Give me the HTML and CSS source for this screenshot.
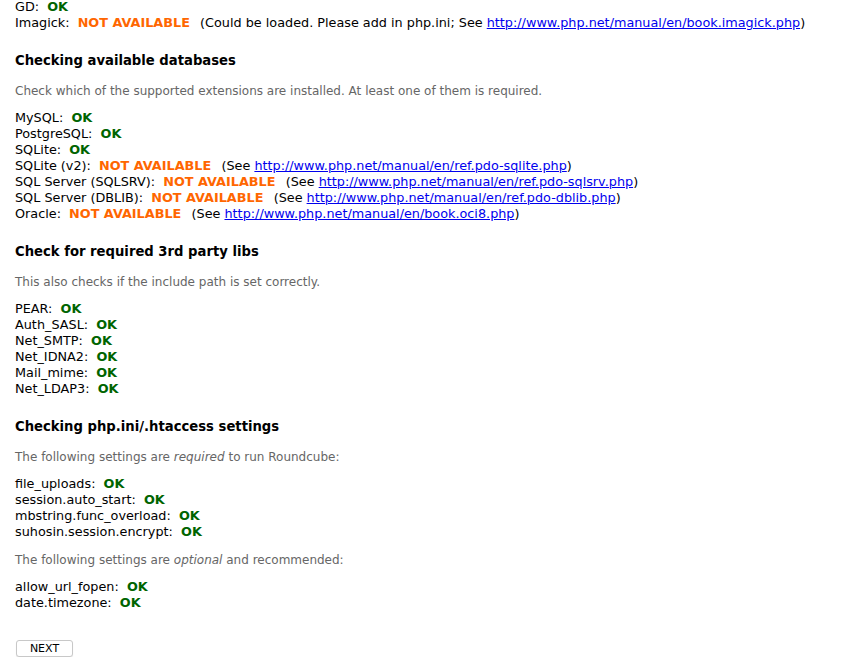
FILE: index.html
```html
<!DOCTYPE html>
<html>
<head>
<meta charset="utf-8">
<title>Roundcube Webmail Installer</title>
<link rel="stylesheet" href="styles.css">
</head>
<body>
<div class="page">
  <div class="list first">
    GD:&nbsp; <span class="success">OK</span><br>
    Imagick:&nbsp; <span class="na">NOT AVAILABLE</span><span class="indent">(Could be loaded. Please add in php.ini; See <a href="#">http://www.php.net/manual/en/book.imagick.php</a>)</span>
  </div>

  <h3>Checking available databases</h3>
  <p class="hint">Check which of the supported extensions are installed. At least one of them is required.</p>
  <div class="list">
    MySQL:&nbsp; <span class="success">OK</span><br>
    PostgreSQL:&nbsp; <span class="success">OK</span><br>
    SQLite:&nbsp; <span class="success">OK</span><br>
    SQLite (v2):&nbsp; <span class="na">NOT AVAILABLE</span><span class="indent">(See <a href="#">http://www.php.net/manual/en/ref.pdo-sqlite.php</a>)</span><br>
    SQL Server (SQLSRV):&nbsp; <span class="na">NOT AVAILABLE</span><span class="indent">(See <a href="#">http://www.php.net/manual/en/ref.pdo-sqlsrv.php</a>)</span><br>
    SQL Server (DBLIB):&nbsp; <span class="na">NOT AVAILABLE</span><span class="indent">(See <a href="#">http://www.php.net/manual/en/ref.pdo-dblib.php</a>)</span><br>
    Oracle:&nbsp; <span class="na">NOT AVAILABLE</span><span class="indent">(See <a href="#">http://www.php.net/manual/en/book.oci8.php</a>)</span>
  </div>

  <h3>Check for required 3rd party libs</h3>
  <p class="hint">This also checks if the include path is set correctly.</p>
  <div class="list">
    PEAR:&nbsp; <span class="success">OK</span><br>
    Auth_SASL:&nbsp; <span class="success">OK</span><br>
    Net_SMTP:&nbsp; <span class="success">OK</span><br>
    Net_IDNA2:&nbsp; <span class="success">OK</span><br>
    Mail_mime:&nbsp; <span class="success">OK</span><br>
    Net_LDAP3:&nbsp; <span class="success">OK</span>
  </div>

  <h3>Checking php.ini/.htaccess settings</h3>
  <p class="hint">The following settings are <em>required</em> to run Roundcube:</p>
  <div class="list">
    file_uploads:&nbsp; <span class="success">OK</span><br>
    session.auto_start:&nbsp; <span class="success">OK</span><br>
    mbstring.func_overload:&nbsp; <span class="success">OK</span><br>
    suhosin.session.encrypt:&nbsp; <span class="success">OK</span>
  </div>
  <p class="hint">The following settings are <em>optional</em> and recommended:</p>
  <div class="list">
    allow_url_fopen:&nbsp; <span class="success">OK</span><br>
    date.timezone:&nbsp; <span class="success">OK</span>
  </div>

  <div class="actions"><button class="btn" type="button">NEXT</button></div>
</div>
</body>
</html>
```
FILE: styles.css
```css
html, body {
  margin: 0;
  padding: 0;
  background: #fff;
}
body {
  font-family: "DejaVu Sans", "Liberation Sans", sans-serif;
  font-size: 12.8px;
  line-height: 16px;
  color: #000;
}
.page {
  padding-left: 15px;
}
.list {
  margin: 11px 0 0 0;
}
.list.first {
  margin-top: -1px;
}
.success {
  color: #006400;
  font-weight: bold;
}
.na {
  color: #f60;
  font-weight: bold;
}
.indent {
  padding-left: 0.8em;
}
a {
  color: #0000ee;
  text-decoration: underline;
}
h3 {
  font-size: 13.2px;
  line-height: 18px;
  font-weight: bold;
  margin: 21px 0 0 0;
}
.hint {
  color: #666;
  font-size: 12px;
  margin: 13px 0 0 0;
}
.list + .hint {
  margin-top: 12px;
}
.hint em {
  font-style: italic;
}
.actions {
  margin-top: 29px;
  padding-left: 1px;
}
.btn {
  font-family: "DejaVu Sans", "Liberation Sans", sans-serif;
  font-size: 11px;
  line-height: 13px;
  width: 57px;
  height: 17px;
  padding: 0;
  background: #fff;
  border: 1px solid #c8c8c8;
  border-radius: 3px;
  box-shadow: 0 1px 1px rgba(0,0,0,0.08);
  color: #000;
}
```
